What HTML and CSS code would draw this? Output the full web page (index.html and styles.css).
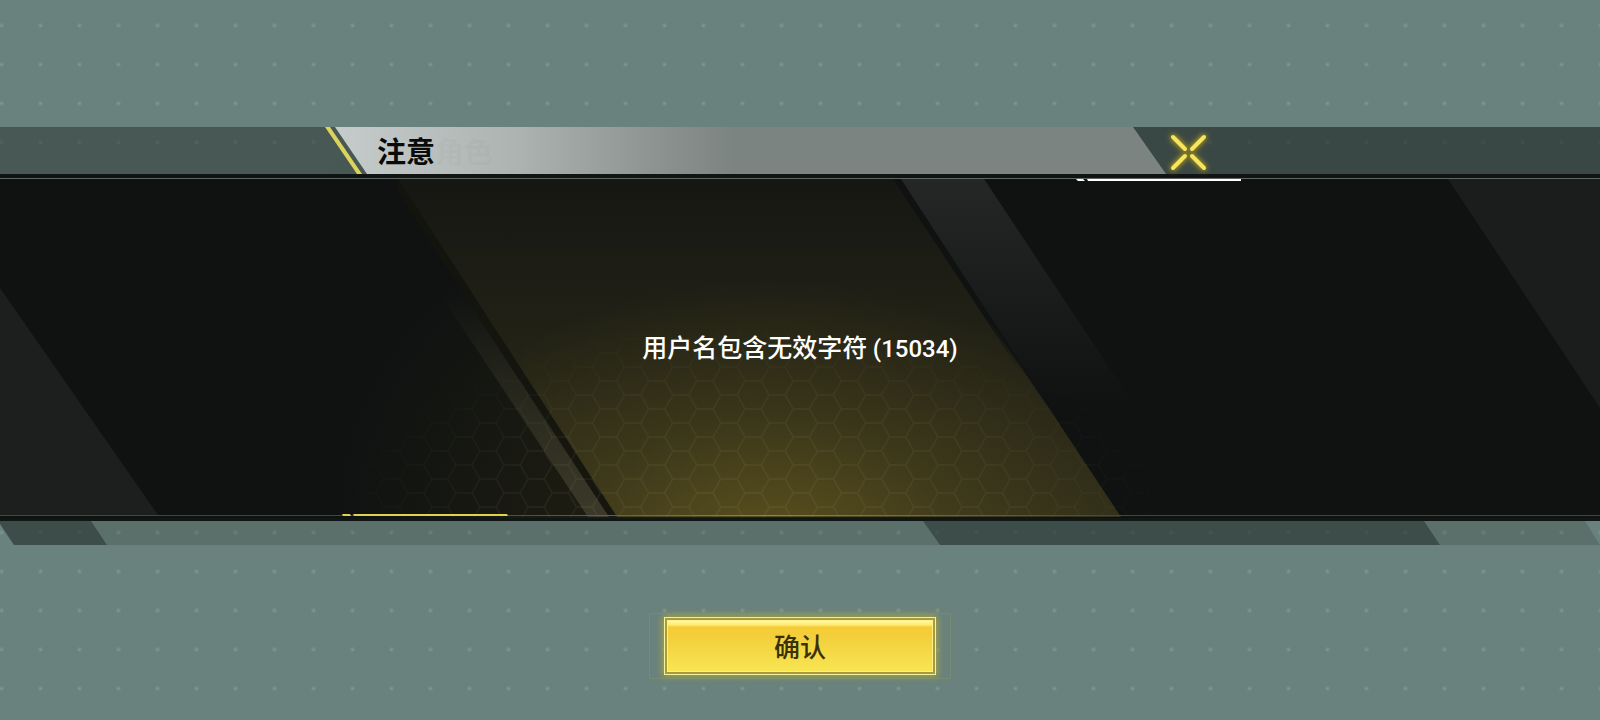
FILE: index.html
```html
<!DOCTYPE html>
<html lang="zh-CN">
<head>
  <meta charset="UTF-8">
  <meta name="viewport" content="width=device-width, initial-scale=1">
  <title>注意</title>
  <link rel="stylesheet" href="styles.css">
</head>
<body>
  <main class="dialog" role="alertdialog" aria-labelledby="title" aria-describedby="message">
    <header class="header">
      <div class="titlebar">
        <span class="slash"></span>
        <h1 class="title" id="title">注意<span class="ghost" aria-hidden="true">角色</span></h1>
      </div>
      <button class="close" type="button" aria-label="关闭">
        <svg viewBox="0 0 44 44" width="44" height="44">
          <path d="M7 7L19 19M38 7L26 19M7 38L19 26M38 38L26 26"/>
        </svg>
      </button>
    </header>

    <section class="panel">
      <svg class="art" viewBox="0 0 1600 347" preserveAspectRatio="none" aria-hidden="true">
        <defs>
          <linearGradient id="beam" x1="0" y1="0" x2="0" y2="1">
            <stop offset="0" stop-color="#161713"/>
            <stop offset=".5" stop-color="#222216"/>
            <stop offset="1" stop-color="#302e1a"/>
          </linearGradient>
          <radialGradient id="glow" gradientUnits="userSpaceOnUse" cx="0" cy="0" r="1" gradientTransform="translate(770 375) scale(380 270)">
            <stop offset="0" stop-color="#7a6a20" stop-opacity=".58"/>
            <stop offset=".5" stop-color="#7a6a20" stop-opacity=".22"/>
            <stop offset="1" stop-color="#7a6a20" stop-opacity="0"/>
          </radialGradient>
          <radialGradient id="haze" gradientUnits="userSpaceOnUse" cx="0" cy="0" r="1" gradientTransform="translate(700 347) scale(370 330)">
            <stop offset="0" stop-color="#3a3214" stop-opacity=".9"/>
            <stop offset="1" stop-color="#3a3214" stop-opacity="0"/>
          </radialGradient>
          <linearGradient id="bandRight" x1="0" y1="0" x2="0" y2="1">
            <stop offset="0" stop-color="#242726"/>
            <stop offset="1" stop-color="#242726" stop-opacity="0"/>
          </linearGradient>
          <linearGradient id="bandLeft" x1="0" y1="0" x2="0" y2="1">
            <stop offset="0" stop-color="#3b3a2a" stop-opacity="0"/>
            <stop offset="1" stop-color="#3b3a2a"/>
          </linearGradient>
          <linearGradient id="shadeRight" x1="0" y1="0" x2="0" y2="1">
            <stop offset=".7" stop-color="#0f1211"/>
            <stop offset="1" stop-color="#0f1211" stop-opacity="0"/>
          </linearGradient>
          <radialGradient id="fade" gradientUnits="userSpaceOnUse" cx="0" cy="0" r="1" gradientTransform="translate(755 347) scale(430 210)">
            <stop offset="0" stop-color="#fff"/>
            <stop offset=".6" stop-color="#fff" stop-opacity=".7"/>
            <stop offset="1" stop-color="#fff" stop-opacity="0"/>
          </radialGradient>
          <linearGradient id="edge" x1="0" y1="0" x2="1" y2="0">
            <stop offset=".3" stop-color="#404745"/>
            <stop offset=".48" stop-color="#a0822c"/>
            <stop offset=".7" stop-color="#404745"/>
          </linearGradient>
          <pattern id="hex" width="48.2" height="28" patternUnits="userSpaceOnUse" patternTransform="translate(488 277)">
            <path d="M0 0H8L16 14L8 28H0M16 14H32.2M48.2 0H40.2L32.2 14L40.2 28H48.2"/>
          </pattern>
          <mask id="hexMask"><rect width="1600" height="347" fill="url(#fade)"/></mask>
        </defs>

        <rect width="1600" height="347" fill="#0f1211"/>
        <path d="M0 114L158 341H0Z" fill="#1d1f1e"/>
        <path d="M1448 5L1600 234V5Z" fill="#1b1d1d"/>
        <rect width="1600" height="347" fill="url(#haze)" opacity=".5"/>
        <!-- lit centre -->
        <path d="M398 5H897L1121 343H617Z" fill="url(#beam)"/>
        <path d="M398 5H897L1121 343H617Z" fill="url(#glow)"/>
        <path d="M398 5L617 343H606L396 15Z" fill="#15150f" opacity=".8"/>
        <path d="M440 120H463L609 343H588Z" fill="url(#bandLeft)"/>
        <path d="M897 5H901L1052 236H1049Z" fill="url(#shadeRight)"/>
        <path d="M893 5H901L1030 203L1024 203Z" fill="url(#shadeRight)"/>
        <path d="M901 5H984L1132 228H1046Z" fill="url(#bandRight)"/>
        <rect y="5" width="1600" height="338" fill="url(#hex)" mask="url(#hexMask)"/>

        <!-- borders -->
        <rect width="1600" height="5" fill="#101413"/>
        <rect y="4" width="1600" height="1" fill="#606664"/>
        <rect y="341" width="1600" height="1" fill="url(#edge)"/>
        <rect y="344" width="1600" height="3" fill="#101613"/>
        <path d="M1076 5H1083L1085 7H1078ZM1087 5H1241V7H1088Z" fill="#fff"/>
        <path d="M342 340H350L351 342H343ZM353 340H507L508 342H354Z" fill="#e0d150"/>
      </svg>
      <p class="message" id="message">用户名包含无效字符 <span class="code">(15034)</span></p>
    </section>

    <svg class="strip" viewBox="0 0 1600 24" preserveAspectRatio="none" aria-hidden="true">
      <path class="light" d="M91 0H923L940 24H107ZM1424 0H1585L1600 24H1440Z"/>
      <path class="dark" d="M0 3L14 24H107L91 0H0ZM923 0H1424L1440 24H940Z"/>
    </svg>

    <button class="confirm" type="button"><span class="face">确认</span></button>
  </main>
</body>
</html>
```
FILE: styles.css
```css
* {
  box-sizing: border-box;
}
body {
  margin: 0;
  min-height: 100vh;
  color: #fff;
  font-family: Roboto, "Noto Sans CJK SC", sans-serif;
  /* dotted backdrop */
  background-color: #6a827d;
  background-image: radial-gradient(circle, #83998f 0, #78908a 1px, transparent 3px);
  background-size: 39px 39px;
  background-position: -18px 6px;
}
.dialog {
  display: flex;
  flex-direction: column;
  padding: 127px 0 32px;
}

/* Header */
.header {
  display: grid;
  grid-template-columns: 325fr 841fr 434fr;
  height: 47px;
  background: linear-gradient(90deg, rgba(28, 36, 34, .44) 20%, rgba(20, 26, 25, .56) 70%);
}
.titlebar {
  grid-column: 2;
  display: flex;
}
.slash {
  flex: none;
  width: 37px;
  margin-right: -27px;
  background: #dcd25c;
  clip-path: polygon(0 0, 5px 0, 100% 100%, 32px 100%);
}
.title {
  flex: 1;
  margin: 0;
  padding-left: 42px;
  font-family: "Noto Sans CJK SC", sans-serif;
  font-size: 29px;
  font-weight: bold;
  line-height: 47px;
  color: #080b0a;
  background: linear-gradient(90deg, #c6cccb 0, #adb3b1 22%, #8d9492 38%, #7c8482 48%, #7c8482 100%);
  clip-path: polygon(0 0, calc(100% - 33px) 0, 100% 100%, 32px 100%);
}
.ghost {
  color: rgba(60, 70, 66, .05);
}
.close {
  width: 44px;
  height: 47px;
  padding: 2px 0 0;
  border: 0;
  background: none;
  cursor: pointer;
}
.close svg {
  display: block;
  fill: none;
  stroke: #f6e560;
  stroke-width: 4;
  stroke-linecap: round;
  filter: drop-shadow(0 0 2px #b09e20) drop-shadow(0 0 3px #8a7f20);
}

/* Panel */
.panel {
  display: grid;
  place-items: center;
  min-height: 347px;
}
.art {
  grid-area: 1 / 1;
  width: 100%;
  height: 100%;
}
#hex path {
  fill: none;
  stroke: #a8a578;
  stroke-width: 1.5;
  stroke-opacity: .13;
}
.message {
  grid-area: 1 / 1;
  z-index: 1;
  margin: 0;
  font-family: "Noto Sans CJK SC", sans-serif;
  font-size: 25px;
  font-weight: 500;
  line-height: 36px;
}
.code {
  font-family: Roboto, sans-serif;
  font-size: 24px;
}
.strip {
  width: 100%;
  height: 24px;
}
.light {
  fill: rgba(40, 50, 46, .22);
}
.dark {
  fill: rgba(20, 28, 26, .52);
}

/* Confirm */
.confirm {
  position: relative;
  align-self: center;
  width: 272px;
  margin-top: 72px;
  padding: 2px;
  border: 1px solid #f5efa0;
  background: #a99a3c;
  font-family: "Noto Sans CJK SC", sans-serif;
  font-size: 26px;
  font-weight: 500;
  color: #3b3108;
  cursor: pointer;
  box-shadow: 0 0 7px 1px #a9a83f;
}
.confirm::before {
  content: "";
  position: absolute;
  inset: -5px -16px;
  border: 1px solid rgba(150, 160, 90, .3);
}
.face {
  display: block;
  border: 1px solid #fff08a;
  line-height: 50px;
  background: linear-gradient(#fff9a8 0, #fdeb72 4px, #f5cc36 6px, #f3d03c 35%, #f8e552 100%);
}
```
